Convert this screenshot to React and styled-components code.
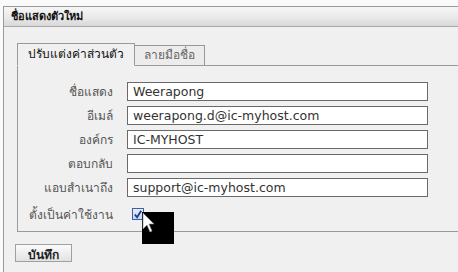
import React from 'react'
import styled, { createGlobalStyle } from 'styled-components'

const GlobalStyle = createGlobalStyle`
    body {
        margin: 0;
        background: #fafafa;
        font-family: Tahoma, "DejaVu Sans", "Noto Sans", sans-serif;
    }
`

const fields = [
    { label: 'ชื่อแสดง', value: 'Weerapong' },
    { label: 'อีเมล์', value: 'weerapong.d@ic-myhost.com' },
    { label: 'องค์กร', value: 'IC-MYHOST' },
    { label: 'ตอบกลับ', value: '' },
    { label: 'แอบสำเนาถึง', value: 'support@ic-myhost.com' },
]

export default function App() {
    return (
        <>
            <GlobalStyle />
            <Page>
                <Window>
                    <Header>ชื่อแสดงตัวใหม่</Header>
                    <Content>
                        <Tabs>
                            <Tab active>ปรับแต่งค่าส่วนตัว</Tab>
                            <Tab>ลายมือชื่อ</Tab>
                        </Tabs>
                        <Panel>
                            <Form>
                                {fields.map((f) => (
                                    <React.Fragment key={f.label}>
                                        <Label>{f.label}</Label>
                                        <Input defaultValue={f.value} />
                                    </React.Fragment>
                                ))}
                                <Label>ตั้งเป็นค่าใช้งาน</Label>
                                <CheckWrap>
                                    <Check>
                                        <svg width="11" height="11" viewBox="0 0 11 11">
                                            <path d="M2 5.5 L4.5 8.5 L9 1.5" fill="none" stroke="#1f3a93" strokeWidth="2" />
                                        </svg>
                                    </Check>
                                    <Cursor>
                                        <svg width="32" height="32" viewBox="0 0 32 32">
                                            <path d="M1 1 L1 17 L5 13 L8 20 L10 19 L7 12 L12 12 Z" fill="#fff" stroke="#888" strokeWidth="0.6" />
                                        </svg>
                                    </Cursor>
                                </CheckWrap>
                            </Form>
                        </Panel>
                    </Content>
                    <Footer>
                        <Button>บันทึก</Button>
                    </Footer>
                </Window>
            </Page>
        </>
    )
}

// the window runs past the screenshot edge, so clip it to the frame
const Page = styled.div`
    width: 458px;
    height: 272px;
    overflow: hidden;
`

const Window = styled.div`
    margin: 6px 0 0 3px;
    width: 520px;
    height: 300px;
    border: 1px solid #9a9a9a;
    background: #f0f0f0;
`

const Header = styled.div`
    height: 19px;
    line-height: 19px;
    padding-left: 7px;
    font-size: 11px;
    font-weight: bold;
    color: #111;
    background: linear-gradient(#f6f6f6, #e8e8e8 60%, #d8d8d8);
    border-bottom: 1px solid #a8a8a8;
`

const Content = styled.div`
    padding: 16px 0 0 13px;
`

const Tabs = styled.div`
    display: flex;
    align-items: flex-end;
    height: 22px;
    border-bottom: 1px solid #999;
`

const Tab = styled.div`
    height: ${(p) => (p.active ? '21px' : '19px')};
    line-height: ${(p) => (p.active ? '21px' : '19px')};
    padding: 0 ${(p) => (p.active ? '10px' : '9px')};
    margin-bottom: ${(p) => (p.active ? '-1px' : '0')};
    border: 1px solid #999;
    border-bottom: ${(p) => (p.active ? '1px solid #f0f0f0' : 'none')};
    border-left: ${(p) => (p.active ? '1px solid #999' : 'none')};
    background: ${(p) => (p.active ? '#f0f0f0' : '#ececec')};
    color: ${(p) => (p.active ? '#111' : '#666')};
    font-size: 12px;
`

const Panel = styled.div`
    height: 149px;
    padding-top: 16px;
    border: 1px solid #999;
    border-top: none;
`

const Form = styled.div`
    display: grid;
    grid-template-columns: 95px 301px;
    column-gap: 14px;
    row-gap: 5px;
    align-items: center;
`

const Label = styled.div`
    text-align: right;
    font-size: 12px;
    color: #555;
`

const Input = styled.input`
    box-sizing: border-box;
    height: 19px;
    width: 301px;
    margin: 0;
    padding: 0 5px;
    border: 1px solid #6a6a6a;
    background: #fff;
    font-family: "DejaVu Sans", Verdana, sans-serif;
    font-size: 12.5px;
    color: #333;
    outline: none;
`

const CheckWrap = styled.div`
    position: relative;
    height: 24px;
    display: flex;
    align-items: center;
    padding-left: 5px;
`

const Check = styled.div`
    box-sizing: border-box;
    width: 12px;
    height: 12px;
    border: 1px solid #3c5fa8;
    background: linear-gradient(#e8eef8, #c6d4ee);
    display: flex;
    align-items: center;
    justify-content: center;
`

const Cursor = styled.div`
    position: absolute;
    left: 15px;
    top: 10px;
    width: 32px;
    height: 32px;
    background: #000;
`

const Footer = styled.div`
    padding: 12px 0 0 11px;
`

const Button = styled.button`
    height: 18px;
    width: 57px;
    padding: 0;
    border: 1px solid #a0a0a0;
    background: linear-gradient(#fbfbfb, #e2e2e2);
    font-family: Tahoma, "DejaVu Sans", sans-serif;
    font-size: 12px;
    font-weight: bold;
    color: #222;
`
